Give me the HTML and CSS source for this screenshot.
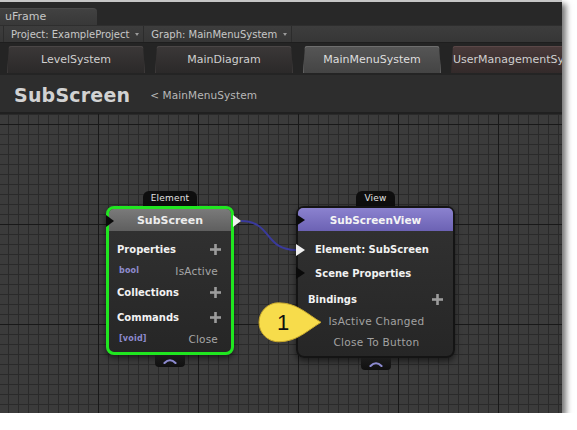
FILE: index.html
```html
<!DOCTYPE html>
<html>
<head>
<meta charset="utf-8">
<title>uFrame</title>
<link rel="stylesheet" href="styles.css">
</head>
<body>
<div class="window">
  <div class="titlestrip"><div class="wintab">uFrame</div></div>
  <div class="toolbar">
    <div class="tb-item">Project: ExampleProject <span class="caret"></span></div>
    <div class="tb-item">Graph: MainMenuSystem <span class="caret"></span></div>
  </div>
  <div class="tabs">
    <div class="tab">LevelSystem</div>
    <div class="tab">MainDiagram</div>
    <div class="tab active">MainMenuSystem</div>
    <div class="tab warm">UserManagementSystem</div>
  </div>
  <div class="header">
    <h1 class="title">SubScreen</h1>
    <span class="crumb">&lt; MainMenuSystem</span>
  </div>
  <div class="canvas">
    <svg class="links" width="562" height="299" viewBox="0 0 562 299">
      <path d="M241 107 C 272 107, 264 136, 296 136" fill="none" stroke="#3a3a9c" stroke-width="2"/>
    </svg>

    <div class="node node-element">
      <div class="node-label">Element</div>
      <div class="node-box green">
        <div class="node-head gray">
          <span class="pin pin-in dark"></span>
          SubScreen
          <span class="pin pin-out light"></span>
        </div>
        <div class="node-body ebody">
          <div class="row section"><span>Properties</span><svg class="plus" width="11" height="11" viewBox="0 0 11 11"><rect x="4.2" y="0" width="2.6" height="11"/><rect x="0" y="4.2" width="11" height="2.6"/></svg></div>
          <div class="row item"><span class="type">bool</span><span class="name">IsActive</span></div>
          <div class="row section gap"><span>Collections</span><svg class="plus" width="11" height="11" viewBox="0 0 11 11"><rect x="4.2" y="0" width="2.6" height="11"/><rect x="0" y="4.2" width="11" height="2.6"/></svg></div>
          <div class="row section"><span>Commands</span><svg class="plus" width="11" height="11" viewBox="0 0 11 11"><rect x="4.2" y="0" width="2.6" height="11"/><rect x="0" y="4.2" width="11" height="2.6"/></svg></div>
          <div class="row item"><span class="type">[void]</span><span class="name">Close</span></div>
        </div>
      </div>
      <div class="collapse"><svg width="14" height="6" viewBox="0 0 14 6"><path d="M1.5 5 Q7 -0.5 12.5 5" fill="none" stroke="#8c8ad0" stroke-width="2.2" stroke-linecap="round"/></svg></div>
    </div>

    <div class="node node-view">
      <div class="node-label">View</div>
      <div class="node-box darkline">
        <div class="node-head lavender">
          <span class="pin pin-in dark vpin"></span>
          SubScreenView
        </div>
        <div class="node-body vbody">
          <div class="vrow r1"><span class="pin pin-in light vpin"></span>Element: SubScreen</div>
          <div class="vrow r2"><span class="pin pin-in dark vpin"></span>Scene Properties</div>
          <div class="vrow r3"><span>Bindings</span><svg class="plus" width="11" height="11" viewBox="0 0 11 11"><rect x="4.2" y="0" width="2.6" height="11"/><rect x="0" y="4.2" width="11" height="2.6"/></svg></div>
          <div class="vrow r4">IsActive Changed</div>
          <div class="vrow r5">Close To Button</div>
        </div>
      </div>
      <div class="collapse"><svg width="14" height="6" viewBox="0 0 14 6"><path d="M1.5 5 Q7 -0.5 12.5 5" fill="none" stroke="#8c8ad0" stroke-width="2.2" stroke-linecap="round"/></svg></div>
    </div>

    <svg class="callout" width="70" height="46" viewBox="0 0 70 46">
      <path d="M66 22.3 C 52 14, 42 2.8, 23.5 2.8 A19.5 19.5 0 0 0 23.5 41.8 C 42 41.8, 52 30.6, 66 22.3 Z" fill="#f7dc4b" stroke="#c9a92c" stroke-width="1"/>
      <text x="28" y="29.5" text-anchor="middle" class="callout-num">1</text>
    </svg>
  </div>
</div>
</body>
</html>
```

FILE: styles.css
```css
* { box-sizing: border-box; }
html, body { margin: 0; padding: 0; background: #ffffff; }
body { font-family: "DejaVu Sans", "Liberation Sans", sans-serif; }

.window {
  width: 562px;
  height: 413px;
  border-top: 2px solid #c6c6c6;
  background: #282828;
  display: flex;
  flex-direction: column;
  overflow: hidden;
  box-shadow: 4px 4px 6px rgba(0,0,0,0.55);
}

.titlestrip {
  height: 23px;
  background: #282828;
  display: flex;
  align-items: flex-end;
}
.wintab {
  width: 97px;
  height: 17px;
  background: linear-gradient(#414141, #383838);
  border-top: 1px solid #4a4a4a;
  border-radius: 0 4px 0 0;
  color: #c6c6c6;
  font-size: 11px;
  line-height: 16px;
  padding-left: 5px;
}

.toolbar {
  height: 17px;
  background: linear-gradient(#3d3d3d, #363636);
  border-top: 1px solid #2e2e2e;
  display: flex;
  padding-left: 3px;
}
.tb-item {
  display: flex;
  align-items: center;
  gap: 6px;
  padding: 0 4px 0 7px;
  border-left: 1px solid #2c2c2c;
  font-size: 10px;
  color: #c8c8c8;
  white-space: nowrap;
}
.tb-item:last-child { border-right: 1px solid #2c2c2c; }
.caret {
  width: 0; height: 0;
  border-left: 2.5px solid transparent;
  border-right: 2.5px solid transparent;
  border-top: 3px solid #9a9a9a;
  margin-top: 1px;
}

.tabs {
  height: 33px;
  background: #242424;
  border-top: 1px solid #1e1e1e;
  display: flex;
  gap: 10px;
  padding: 3px 0 0 7px;
}
.tab {
  flex: none;
  width: 138px;
  height: 27px;
  border-radius: 5px 5px 0 0;
  background: linear-gradient(#3b3838, #2b2929);
  box-shadow: inset 0 1px 0 #4a4646, inset 1px 0 0 #3e3b3b, inset -1px 0 0 #3e3b3b;
  clip-path: polygon(2px 0, calc(100% - 2px) 0, 100% 100%, 0 100%);
  color: #cfcfcf;
  font-size: 11px;
  display: flex;
  align-items: center;
  justify-content: center;
  white-space: nowrap;
}
.tab.active {
  background: linear-gradient(#565656, #444444);
  box-shadow: inset 0 1px 0 #6e6e6e, inset 1px 0 0 #626262, inset -1px 0 0 #626262;
  color: #dedede;
}
.tab.warm {
  background: linear-gradient(#4a3a3a, #332a2a);
  box-shadow: inset 0 1px 0 #5a4848;
  justify-content: flex-start;
  padding-left: 2px;
}

.header {
  height: 39px;
  background: #2d2d2d;
  border-bottom: 2px solid #202020;
  display: flex;
  align-items: center;
  padding: 2px 0 0 14px;
}
.title {
  margin: 0;
  font-size: 19px;
  font-weight: bold;
  color: #d2d2d2;
  letter-spacing: 0.2px;
}
.crumb {
  margin-left: 20px;
  font-size: 10.5px;
  color: #b8b8b8;
  letter-spacing: 0.1px;
}

.canvas {
  flex: 1;
  position: relative;
  background-color: #3b3b3b;
  background-image:
    linear-gradient(90deg, #181818 1px, transparent 1px),
    linear-gradient(#181818 1px, transparent 1px),
    linear-gradient(90deg, #2a2a2a 1px, transparent 1px),
    linear-gradient(#2a2a2a 1px, transparent 1px);
  background-size: 100px 100px, 100px 100px, 10px 10px, 10px 10px;
  background-position: 98px 0, 0 10px, 8px 0, 0 0;
}
.links { position: absolute; left: 0; top: 0; }

.node {
  position: absolute;
  display: flex;
  flex-direction: column;
  align-items: center;
}
.node-element { left: 106px; top: 77px; width: 128px; }
.node-view { left: 296px; top: 77px; width: 159px; }

.node-label {
  height: 15px;
  line-height: 15px;
  padding: 0 8px;
  background: #0e0e0e;
  border-radius: 6px 6px 0 0;
  color: #e2e2e2;
  font-size: 9px;
  letter-spacing: 0.2px;
}
.node-box {
  width: 100%;
  border-radius: 8px;
  box-shadow: 0 3px 6px rgba(0,0,0,0.55);
  background: linear-gradient(#323232, #262626);
}
.node-box.green { border: 3px solid #20e620; height: 149px; }
.node-box.darkline { border: 2px solid #141414; height: 152px; }

.node-head {
  position: relative;
  display: flex;
  align-items: center;
  justify-content: center;
  font-size: 11px;
  font-weight: bold;
  color: #ececec;
  border-radius: 5px 5px 0 0;
}
.node-head.gray { height: 22px; background: linear-gradient(#7a7a7a, #5f5f5f); }
.node-head.lavender { height: 23px; background: linear-gradient(#8b82cf, #6c62b4); font-size: 10.5px; color: #f4f4f4; }

.pin {
  position: absolute;
  width: 0; height: 0;
  border-top: 6px solid transparent;
  border-bottom: 6px solid transparent;
  border-left: 8px solid #0a0a0a;
}
.pin.light { border-left-color: #f0f0f0; }
.pin.dark { border-left-color: #0a0a0a; }
.pin-in { left: -3px; top: 50%; margin-top: -5px; }
.pin-out { left: calc(100% + 2px); top: 50%; margin-top: -5px; }
.vpin { left: -2px; margin-top: -6px; border-left-width: 9px; }

.ebody { padding: 7px 10px 3px 8px; }
.row {
  display: flex;
  align-items: center;
  justify-content: space-between;
}
.row.section {
  height: 22px;
  font-size: 10px;
  font-weight: bold;
  color: #f2f2f2;
}
.row.section.gap { margin-bottom: 3px; }
.row.item { height: 21px; padding: 0 3px 0 2px; }
.type { font-size: 8px; font-weight: bold; color: #8d8bcf; letter-spacing: 0.2px; }
.name { font-size: 10.5px; color: #a6a6a6; letter-spacing: 0.2px; }
.plus { fill: #9c9c9c; }

.vbody { padding: 7px 0 4px; }
.vrow {
  position: relative;
  display: flex;
  align-items: center;
  font-size: 10px;
  font-weight: bold;
  color: #f2f2f2;
  white-space: nowrap;
}
.vrow.r1 { height: 23px; padding-left: 17px; }
.vrow.r2 { height: 24px; padding-left: 17px; }
.vrow.r3 { height: 24px; margin-top: 2px; padding: 0 10px 0 10px; justify-content: space-between; }
.vrow.r4, .vrow.r5 {
  justify-content: center;
  font-weight: normal;
  font-size: 10.5px;
  letter-spacing: 0.3px;
  color: #a2a2a2;
  padding-left: 2px;
}
.vrow.r4 { height: 20px; }
.vrow.r5 { height: 21px; }

.collapse {
  width: 30px;
  height: 12px;
  background: linear-gradient(#1c1c1c, #101010);
  border-radius: 0 0 4px 4px;
  display: flex;
  align-items: center;
  justify-content: center;
}

.callout { position: absolute; left: 255px; top: 186px; }
.callout-num {
  font-family: "Liberation Sans", Arial, sans-serif;
  font-size: 22px;
  fill: #111111;
}
```
